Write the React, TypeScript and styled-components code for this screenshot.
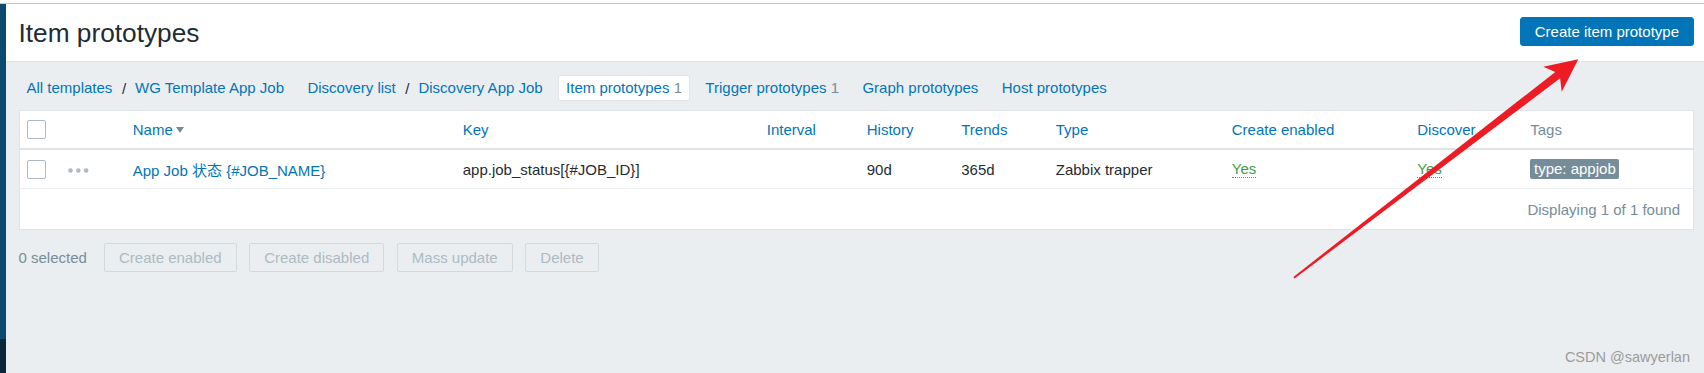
import React from "react";
import styled, { createGlobalStyle } from "styled-components";

const FONT = `"Liberation Sans", Arial, "Noto Sans CJK SC", sans-serif`;

const GlobalStyle = createGlobalStyle`
  * { box-sizing: border-box; }
  html, body { margin: 0; padding: 0; height: 100%; }
  body {
    background: #ebeef0;
    color: #1f2c33;
    font-family: ${FONT};
    font-size: 15px;
  }
  #root { height: 100%; }
`;

const Page = styled.div`
  position: relative;
  min-height: 100vh;
  display: flex;
  flex-direction: column;
  overflow: hidden;
`;

const TopStrip = styled.div`
  height: 4px;
  flex-shrink: 0;
  background: #fff;
  border-bottom: 1px solid #c4c4c4;
`;

const Body = styled.div`
  flex: 1;
  display: flex;
`;

const Sidebar = styled.aside`
  width: 6px;
  flex-shrink: 0;
  display: flex;
  flex-direction: column;
`;

const SidebarPart = styled.div<{ $dark?: boolean }>`
  background: ${(p) => (p.$dark ? "#0b2636" : "#0a4a6e")};
  ${(p) => (p.$dark ? "height: 34px;" : "flex: 1;")}
`;

const Main = styled.main`
  flex: 1;
  min-width: 0;
  display: flex;
  flex-direction: column;
`;

const Header = styled.header`
  height: 58px;
  background: #fff;
  border-bottom: 1px solid #dfe4e7;
  display: flex;
  align-items: center;
  justify-content: space-between;
  padding: 0 10px 0 12.5px;
`;

const Title = styled.h1`
  margin: 0;
  padding-top: 2px;
  font-size: 26.25px;
  font-weight: normal;
  line-height: 1.2;
  color: #1f2c33;
`;

const PrimaryButton = styled.button`
  height: 29px;
  margin-bottom: 2px;
  padding: 0 14px;
  border: 1px solid #0275b8;
  border-radius: 3px;
  background: #0275b8;
  color: #fff;
  font-family: ${FONT};
  font-size: 15px;
  cursor: pointer;
`;

const Content = styled.div`
  padding: 0 10.5px 0 12.5px;
  display: flex;
  flex-direction: column;
`;

const Nav = styled.nav`
  display: flex;
  align-items: center;
  padding: 13px 0 9px;
`;

const NavGroup = styled.div`
  display: flex;
  align-items: center;
  margin-right: 7.4px;
`;

const NavLink = styled.a<{ $active?: boolean }>`
  display: block;
  padding: 3px 7px;
  line-height: 18px;
  border: 1px solid ${(p) => (p.$active ? "#dfe4e7" : "transparent")};
  border-radius: 2px;
  background: ${(p) => (p.$active ? "#fff" : "transparent")};
  color: #0275b8;
  text-decoration: none;
  white-space: nowrap;
`;

const Count = styled.span`
  color: #768d99;
`;

const Separator = styled.span`
  padding: 0 1px 0 1.5px;
  color: #1f2c33;
`;

const TableCard = styled.section`
  background: #fff;
  border: 1px solid #dfe4e7;
`;

const COLS =
  "42px 65px 330px 304px 100px 94.5px 94.5px 176px 185.5px 113px 1fr";

const Row = styled.div<{ $head?: boolean }>`
  display: grid;
  grid-template-columns: ${COLS};
  align-items: center;
  height: 39px;
  border-bottom: ${(p) => (p.$head ? "2px solid #dfe4e7" : "1px solid #ebeef0")};
`;

const Cell = styled.div<{ $muted?: boolean }>`
  padding: 0 6.25px;
  white-space: nowrap;
  color: ${(p) => (p.$muted ? "#768d99" : "#1f2c33")};
  display: flex;
  align-items: center;
`;

const HeadLink = styled.a`
  color: #0275b8;
  text-decoration: none;
`;

const SortArrow = styled.span`
  display: inline-block;
  width: 0;
  height: 0;
  margin-left: 3.5px;
  border-left: 4.5px solid transparent;
  border-right: 4.5px solid transparent;
  border-top: 6px solid #768d99;
`;

const Checkbox = styled.span`
  display: block;
  width: 19px;
  height: 19px;
  margin-left: 1px;
  border: 1px solid #acbbc2;
  border-radius: 2px;
  background: #fff;
`;

const DotsIcon = styled.svg`
  display: block;
  margin-top: 3px;
`;

const ItemLink = styled.a`
  color: #0275b8;
  text-decoration: none;
`;

const YesLink = styled.a`
  color: #429e47;
  text-decoration: none;
  border-bottom: 1px dotted #429e47;
`;

const Tag = styled.span`
  display: inline-block;
  padding: 0 3.75px;
  line-height: 20px;
  border-radius: 2px;
  background: #768d99;
  color: #fff;
`;

const Paging = styled.div`
  height: 40px;
  display: flex;
  align-items: center;
  justify-content: flex-end;
  padding-right: 12.5px;
  color: #768d99;
`;

const ActionBar = styled.div`
  display: flex;
  align-items: center;
  gap: 12.6px;
  margin-top: 13px;
`;

const SelectedCount = styled.span`
  color: #768d99;
  margin-right: 4.5px;
`;

const ActionButton = styled.button`
  height: 29px;
  padding: 0 14px;
  border: 1px solid #d3dade;
  border-radius: 2px;
  background: #ebeef0;
  color: #acbbc2;
  font-family: ${FONT};
  font-size: 15px;
`;

const Watermark = styled.div`
  position: absolute;
  right: 14px;
  bottom: 9px;
  font-size: 14.5px;
  line-height: 14px;
  color: #9b9b9b;
  pointer-events: none;
`;

const Overlay = styled.svg`
  position: absolute;
  left: 0;
  top: 0;
  pointer-events: none;
`;

const Dots = () => (
  <DotsIcon width="21" height="5" viewBox="0 0 21 5">
    <circle cx="2.5" cy="2.5" r="2.3" fill="#acbbc2" />
    <circle cx="10.3" cy="2.5" r="2.3" fill="#acbbc2" />
    <circle cx="18.1" cy="2.5" r="2.3" fill="#acbbc2" />
  </DotsIcon>
);

const headers = ["Key", "Interval", "History", "Trends", "Type", "Create enabled", "Discover"];

export default function App() {
  return (
    <>
      <GlobalStyle />
      <Page>
        <TopStrip />
        <Body>
          <Sidebar>
            <SidebarPart />
            <SidebarPart $dark />
          </Sidebar>
          <Main>
            <Header>
              <Title>Item prototypes</Title>
              <PrimaryButton>Create item prototype</PrimaryButton>
            </Header>
            <Content>
              <Nav>
                <NavGroup>
                  <NavLink href="#">All templates</NavLink>
                  <Separator>/</Separator>
                  <NavLink href="#">WG Template App Job</NavLink>
                </NavGroup>
                <NavGroup>
                  <NavLink href="#">Discovery list</NavLink>
                  <Separator>/</Separator>
                  <NavLink href="#">Discovery App Job</NavLink>
                </NavGroup>
                <NavGroup>
                  <NavLink href="#" $active>
                    Item prototypes <Count>1</Count>
                  </NavLink>
                </NavGroup>
                <NavGroup>
                  <NavLink href="#">
                    Trigger prototypes <Count>1</Count>
                  </NavLink>
                </NavGroup>
                <NavGroup>
                  <NavLink href="#">Graph prototypes</NavLink>
                </NavGroup>
                <NavGroup>
                  <NavLink href="#">Host prototypes</NavLink>
                </NavGroup>
              </Nav>
              <TableCard>
                <Row $head>
                  <Cell>
                    <Checkbox />
                  </Cell>
                  <Cell />
                  <Cell>
                    <HeadLink href="#">Name</HeadLink>
                    <SortArrow />
                  </Cell>
                  {headers.map((h) => (
                    <Cell key={h}>
                      <HeadLink href="#">{h}</HeadLink>
                    </Cell>
                  ))}
                  <Cell $muted>Tags</Cell>
                </Row>
                <Row>
                  <Cell>
                    <Checkbox />
                  </Cell>
                  <Cell>
                    <Dots />
                  </Cell>
                  <Cell>
                    <ItemLink href="#">App Job 状态 {"{#JOB_NAME}"}</ItemLink>
                  </Cell>
                  <Cell>app.job_status[{"{#JOB_ID}"}]</Cell>
                  <Cell />
                  <Cell>90d</Cell>
                  <Cell>365d</Cell>
                  <Cell>Zabbix trapper</Cell>
                  <Cell>
                    <YesLink href="#">Yes</YesLink>
                  </Cell>
                  <Cell>
                    <YesLink href="#">Yes</YesLink>
                  </Cell>
                  <Cell>
                    <Tag>type: appjob</Tag>
                  </Cell>
                </Row>
                <Paging>Displaying 1 of 1 found</Paging>
              </TableCard>
              <ActionBar>
                <SelectedCount>0 selected</SelectedCount>
                <ActionButton disabled>Create enabled</ActionButton>
                <ActionButton disabled>Create disabled</ActionButton>
                <ActionButton disabled>Mass update</ActionButton>
                <ActionButton disabled>Delete</ActionButton>
              </ActionBar>
            </Content>
          </Main>
        </Body>
        <Watermark>CSDN @sawyerlan</Watermark>
        <Overlay width="1704" height="373" viewBox="0 0 1704 373">
          <polygon
            points="1293.4,276.9 1555.3,71.9 1543.3,66.7 1578.3,59.3 1561.7,91.7 1560.1,78.3 1294.6,278.5"
            fill="#ed1c24"
          />
        </Overlay>
      </Page>
    </>
  );
}
